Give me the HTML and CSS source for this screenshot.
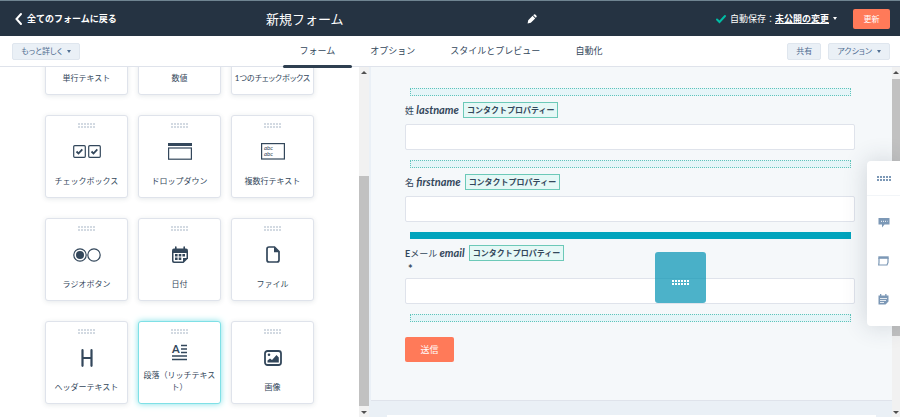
FILE: index.html
```html
<!DOCTYPE html>
<html lang="ja">

<head>
  <meta charset="utf-8">
  <title>新規フォーム</title>
  <meta name="viewport" content="width=device-width, initial-scale=1">
  <link rel="stylesheet" href="styles.css">
</head>

<body>
  <header class="topnav">
    <a class="back" href="#">
      <svg width="7" height="12" viewBox="0 0 7 12"><path d="M6 1L1.5 6L6 11" fill="none" stroke="#fff" stroke-width="2" stroke-linecap="round"/></svg>
      全てのフォームに戻る
    </a>
    <div class="title">
      <h1>新規フォーム</h1>
      <button class="edit" aria-label="名前を編集">
        <svg width="10" height="10" viewBox="0 0 10 10"><path d="M.6 9.4L1.2 6.2L5.6 1.8L8.2 4.4L3.8 8.8ZM6.2 1.2L7 .5Q7.8 -.1 8.6 .7L9.3 1.4Q10.1 2.2 9.5 3L8.8 3.8Z" fill="#fff"/></svg>
      </button>
    </div>
    <div class="status">
      <svg width="10" height="8" viewBox="0 0 10 8"><path d="M1 4.5L3.5 7L9 1" fill="none" stroke="#00bda5" stroke-width="2" stroke-linecap="round"/></svg>
      <span>自動保存：<a href="#">未公開の変更</a></span>
      <span class="caret"></span>
      <button class="primary">更新</button>
    </div>
  </header>

  <div class="toolbar">
    <div class="tools"><button class="button">もっと詳しく <span class="caret"></span></button></div>
    <nav class="tabs">
      <a class="active" href="#">フォーム</a>
      <a href="#">オプション</a>
      <a href="#">スタイルとプレビュー</a>
      <a href="#">自動化</a>
    </nav>
    <div class="tools right">
      <button class="button">共有</button>
      <button class="button">アクション <span class="caret"></span></button>
    </div>
  </div>

  <main class="editor">
    <section class="library">
      <div class="cards">
        <button class="card"><span class="grip"></span><span class="icon"></span><span class="name">単行テキスト</span></button>
        <button class="card"><span class="grip"></span><span class="icon"></span><span class="name">数値</span></button>
        <button class="card"><span class="grip"></span><span class="icon"></span><span class="name nowrap">1つのチェックボックス</span></button>

        <button class="card"><span class="grip"></span>
          <span class="icon"><svg width="28" height="13" viewBox="0 0 28 13" fill="none" stroke="#33475b"><rect x=".7" y=".7" width="11.6" height="11.6" rx="1" stroke-width="1.2"/><rect x="15.7" y=".7" width="11.6" height="11.6" rx="1" stroke-width="1.2"/><path d="M3.5 6.5L5.5 8.5L9.3 4.3M18.5 6.5L20.5 8.5L24.3 4.3" stroke-width="1.8"/></svg></span>
          <span class="name">チェックボックス</span></button>
        <button class="card"><span class="grip"></span>
          <span class="icon"><svg width="24" height="17" viewBox="0 0 24 17"><path d="M0 0H24V3H0Z" fill="#33475b"/><rect x=".6" y="5" width="22.8" height="11.2" fill="none" stroke="#33475b" stroke-width="1.2"/></svg></span>
          <span class="name">ドロップダウン</span></button>
        <button class="card"><span class="grip"></span>
          <span class="icon"><svg width="24" height="17" viewBox="0 0 24 17"><rect x=".6" y=".6" width="22.8" height="15.4" fill="none" stroke="#33475b" stroke-width="1.2"/><g class="abc"><text x="3" y="7">abc</text><text x="3" y="13">abc</text></g></svg></span>
          <span class="name">複数行テキスト</span></button>

        <button class="card"><span class="grip"></span>
          <span class="icon"><svg width="28" height="14" viewBox="0 0 28 14"><g fill="none" stroke="#33475b" stroke-width="1.2"><circle cx="7" cy="7" r="6.2"/><circle cx="21" cy="7" r="6.2"/></g><circle cx="7" cy="7" r="4" fill="#33475b"/></svg></span>
          <span class="name">ラジオボタン</span></button>
        <button class="card"><span class="grip"></span>
          <span class="icon"><svg width="16" height="18" viewBox="0 0 16 18"><path d="M3.8 1V4M12.2 1V4" stroke="#33475b" stroke-width="1.6" stroke-linecap="round"/><path d="M2 2.5H14Q16 2.5 16 4.5V12.5L11.5 17H2Q0 17 0 15V4.5Q0 2.5 2 2.5Z" fill="#33475b"/><path d="M1.5 7H14.5V12H11V15.6H2.5Q1.5 15.6 1.5 14.6Z" fill="#fff"/><path d="M3 8H5.6V10.4H3ZM6.7 8H9.3V10.4H6.7ZM10.4 8H13V10.4H10.4ZM3 11.6H5.6V14H3ZM6.7 11.6H9.3V14H6.7Z" fill="#33475b"/></svg></span>
          <span class="name">日付</span></button>
        <button class="card"><span class="grip"></span>
          <span class="icon"><svg width="14" height="17" viewBox="0 0 14 17"><path d="M3 1H8.5L13 5.5V14Q13 16 11 16H3Q1 16 1 14V3Q1 1 3 1Z" fill="none" stroke="#33475b" stroke-width="1.7"/><path d="M8 1L13.3 6.3H8Z" fill="#33475b"/></svg></span>
          <span class="name">ファイル</span></button>

        <button class="card"><span class="grip"></span>
          <span class="icon"><svg width="14" height="18" viewBox="0 0 14 18"><path d="M2.5 1.2V16.8M11.5 1.2V16.8M2.5 9H11.5" fill="none" stroke="#33475b" stroke-width="2.2" stroke-linecap="round"/></svg></span>
          <span class="name">ヘッダーテキスト</span></button>
        <button class="card selected"><span class="grip"></span>
          <span class="icon"><svg width="16" height="18" viewBox="0 0 16 18"><text class="letter" x="0" y="10">A</text><path d="M9 2.5H15M9 6H15M9 9.5H15M0 13H15M0 16.5H15" stroke="#33475b" stroke-width="1.4"/></svg></span>
          <span class="name">段落（リッチテキスト）</span></button>
        <button class="card"><span class="grip"></span>
          <span class="icon"><svg width="18" height="16" viewBox="0 0 18 16"><rect x="1" y="1" width="16" height="14" rx="2.5" fill="none" stroke="#33475b" stroke-width="1.8"/><circle cx="5" cy="4.8" r="1.3" fill="#33475b"/><path d="M3.5 12.5V10.5L6 8.5L8 10L12.5 5L14.8 7.5V12.5Z" fill="#33475b"/></svg></span>
          <span class="name">画像</span></button>
      </div>
      <div class="scrollbar">
        <span class="arrow up"></span>
        <span class="thumb low"></span>
        <span class="arrow down"></span>
      </div>
    </section>

    <section class="preview">
      <form class="form">
        <div class="dropzone"></div>
        <div class="field">
          <label for="lastname">姓 <em>lastname</em></label>
          <span class="badge">コンタクトプロパティー</span>
        </div>
        <input id="lastname" type="text">

        <div class="dropzone"></div>
        <div class="field">
          <label for="firstname">名 <em>firstname</em></label>
          <span class="badge">コンタクトプロパティー</span>
        </div>
        <input id="firstname" type="text">

        <div class="dropzone target"></div>
        <div class="field">
          <label for="email"><b>E</b>メール <em>email</em></label>
          <span class="badge">コンタクトプロパティー</span>
        </div>
        <div class="required">*</div>
        <input id="email" type="text">

        <div class="dropzone"></div>
        <button class="primary submit" type="button">送信</button>
        <div class="dragged"><span class="grip"></span></div>
      </form>
      <div class="below"><div class="sheet"></div></div>
    </section>
    <div class="scrollbar page">
      <span class="arrow up"></span>
      <span class="thumb high"></span>
      <span class="arrow down"></span>
    </div>

    <aside class="dock">
      <span class="handle"><span class="grip"></span></span>
      <button aria-label="チャット"><svg width="12" height="10" viewBox="0 0 12 10"><path d="M.5 0H11.5V6.5H6.5L4 9.5V6.5H.5Z" fill="#7c98b6"/><path d="M3 3.3H9.5" stroke="#fff" stroke-width="1" stroke-dasharray="1 1"/></svg></button>
      <button aria-label="ページ"><svg width="11" height="10" viewBox="0 0 11 10"><path d="M1 2V6.5L.7 9H9L10 6.5V2" fill="none" stroke="#7c98b6" stroke-width="1.2"/><path d="M.3 .3H10.7V2.8H.3Z" fill="#7c98b6"/></svg></button>
      <button aria-label="予定"><svg width="11" height="11" viewBox="0 0 11 11"><path d="M.5 1.5H2V0H3.3V1.5H7.2V0H8.5V1.5H10.5V7.5L7.5 10.5H.5Z" fill="#7c98b6"/><path d="M2 4.5H9M2 6.5H8M2 8.5H6" stroke="#fff" stroke-width=".8"/></svg></button>
    </aside>
  </main>
</body>

</html>
```
FILE: styles.css
```css
* {
  box-sizing: border-box;
}

body {
  margin: 0;
  height: 100vh;
  display: flex;
  flex-direction: column;
  overflow: hidden;
  font-family: "Lato", "Noto Sans CJK JP", sans-serif;
  font-size: 9px;
  line-height: 12px;
  color: #33475b;
}

button {
  font: inherit;
  color: inherit;
  padding: 0;
  border: none;
  background: none;
}

svg {
  display: block;
  overflow: visible;
}

.caret {
  display: inline-block;
  border: 2px solid transparent;
  border-top: 3px solid currentColor;
  border-bottom: none;
}

.grip {
  width: 17px;
  height: 5px;
  flex: none;
  color: #d3dae2;
  background: radial-gradient(circle at 1px 1px, currentColor 1px, transparent 1px) 0 0 / 3px 3px;
}

/* header */
.topnav {
  height: 36px;
  flex: none;
  display: flex;
  align-items: center;
  padding: 0 10px 0 15px;
  border-top: 1px solid #6f8491;
  background-color: #253342;
  color: #fff;
}

.back {
  width: 251px;
  display: flex;
  align-items: center;
  gap: 5px;
  color: #fff;
  font-weight: bold;
  text-decoration: none;
}

.title {
  width: 31%;
  display: flex;
  align-items: center;
  justify-content: space-between;
}

h1 {
  margin: 0;
  font-size: 13px;
  font-weight: normal;
  line-height: 20px;
}

.status {
  margin-left: auto;
  display: flex;
  align-items: center;
  gap: 4px;
}

.status a {
  color: #fff;
  font-weight: bold;
}

.primary {
  height: 20px;
  width: 37px;
  margin-left: 12px;
  border-radius: 2px;
  background-color: #ff7a59;
  color: #fff;
  font-size: 8px;
}

/* toolbar */
.toolbar {
  height: 31px;
  flex: none;
  display: grid;
  grid-template-columns: 1fr auto 1fr;
  align-items: center;
  padding: 0 10px 0 12px;
  border-bottom: 1px solid #dfe3eb;
}

.tools {
  display: flex;
  gap: 7px;
}

.right {
  justify-content: flex-end;
}

.button {
  height: 17px;
  padding: 0 8px;
  border: 1px solid #dfe6ee;
  border-radius: 2px;
  background-color: #eaf0f6;
  color: #506e91;
  font-size: 8px;
  font-feature-settings: "palt";
}

.button .caret {
  margin-left: 3px;
  vertical-align: middle;
}

.tabs {
  align-self: stretch;
  display: flex;
  gap: 1px;
}

.tabs a {
  position: relative;
  padding: 0 17px;
  line-height: 30px;
  color: #33475b;
  text-decoration: none;
}

.tabs .active::after {
  content: "";
  position: absolute;
  z-index: 2;
  left: 0;
  right: 0;
  bottom: -2px;
  height: 3px;
  border-radius: 2px;
  background-color: #2e3f50;
}

/* editor */
.editor {
  position: relative;
  flex: 1;
  min-height: 0;
  display: flex;
}

.library {
  width: 41%;
  display: flex;
  justify-content: space-between;
  overflow: hidden;
}

/* list is scrolled to its end */
.cards {
  padding: 0 0 13px 45px;
  display: grid;
  grid-template-columns: repeat(3, 83px);
  grid-auto-rows: 83px;
  gap: 20px 10px;
  align-content: end;
}

.card {
  display: flex;
  flex-direction: column;
  align-items: center;
  padding: 7px 4px 10px;
  border: 1px solid #dfe3eb;
  border-radius: 3px;
  background-color: #fff;
  box-shadow: 0 1px 5px rgba(45, 62, 80, .12);
  font-size: 8px;
}

.card.selected {
  border-color: #7fe0e6;
  box-shadow: 0 0 6px #7fe0e6;
}

.icon {
  flex: 1;
  display: flex;
  align-items: center;
}

.nowrap {
  white-space: nowrap;
  font-feature-settings: "palt";
}

.abc {
  font-size: 6px;
  font-style: italic;
  fill: #33475b;
}

.letter {
  font-size: 11px;
  font-weight: bold;
  line-height: 11px;
  fill: #33475b;
}

.scrollbar {
  width: 10px;
  display: flex;
  flex-direction: column;
  align-items: center;
  padding: 4px 0 3px;
  background-color: #f1f1f1;
}

.arrow {
  border: 3px solid transparent;
}

.up {
  border-top: none;
  border-bottom-color: #505050;
}

.down {
  border-bottom: none;
  border-top-color: #505050;
}

.thumb {
  width: 100%;
  background-color: #c1c1c1;
}

.low {
  height: 67%;
  margin: auto 0 5px;
}

.high {
  height: 75%;
  margin: 5px 0 auto;
}

.scrollbar.page {
  width: 8px;
}

/* form preview */
.preview {
  flex: 1;
  display: flex;
  flex-direction: column;
  border-left: 2px solid #eaf0f6;
  background-color: #f5f8fa;
}

.form {
  position: relative;
  padding: 21px 37px 38px 34px;
}

.dropzone {
  height: 8px;
  margin: 0 4px 6px 5px;
  border: 1px dotted #5fc4bb;
  background-color: #e5f5f8;
}

.dropzone.target {
  height: 7px;
  margin-bottom: 6px;
  border: none;
  background-color: #00a4bd;
}

.field {
  display: flex;
  align-items: center;
  gap: 4px;
  height: 16px;
  margin-bottom: 6px;
}

.field em {
  font-size: 11px;
  font-weight: bold;
}

.badge {
  height: 16px;
  padding: 0 3px;
  border: 1px solid #6cc9b8;
  background-color: #e5f8f6;
  font-size: 8px;
  font-weight: bold;
  line-height: 14px;
}

.required {
  height: 17px;
  margin: -6px 0 0 3px;
  font-size: 11px;
  font-weight: bold;
  line-height: 16px;
}

.form input {
  display: block;
  width: 100%;
  height: 26px;
  margin-bottom: 10px;
  border: 1px solid #dfe3eb;
  border-radius: 2px;
  background-color: #fff;
}

.submit {
  display: block;
  width: 49px;
  height: 25px;
  margin: 15px 0 0;
  font-size: 9px;
}

.dragged {
  position: absolute;
  top: 185px;
  right: 186px;
  width: 51px;
  height: 51px;
  display: flex;
  align-items: center;
  justify-content: center;
  padding-top: 10px;
  border-radius: 3px;
  background-color: rgba(0, 145, 178, .7);
}

.dragged .grip {
  color: #fff;
}

.below {
  flex: 1;
  padding: 14px 16px 0;
  border-top: 1px solid #dfe3eb;
  background-color: #eaf0f6;
}

.sheet {
  height: 100%;
  background-color: #fff;
}

/* floating dock */
.dock {
  position: absolute;
  top: 94px;
  right: 0;
  width: 33px;
  display: flex;
  flex-direction: column;
  padding-bottom: 8px;
  border-radius: 4px 0 0 4px;
  background-color: #fff;
  box-shadow: 0 0 24px rgba(45, 62, 80, .2);
}

.handle {
  height: 35px;
  display: flex;
  align-items: center;
  justify-content: center;
  margin-bottom: 8px;
  border-bottom: 1px solid #f2f5f8;
}

.dock .grip {
  width: 14px;
  color: #7c98b6;
}

.dock button {
  height: 38px;
  display: flex;
  align-items: center;
  justify-content: center;
}
```
